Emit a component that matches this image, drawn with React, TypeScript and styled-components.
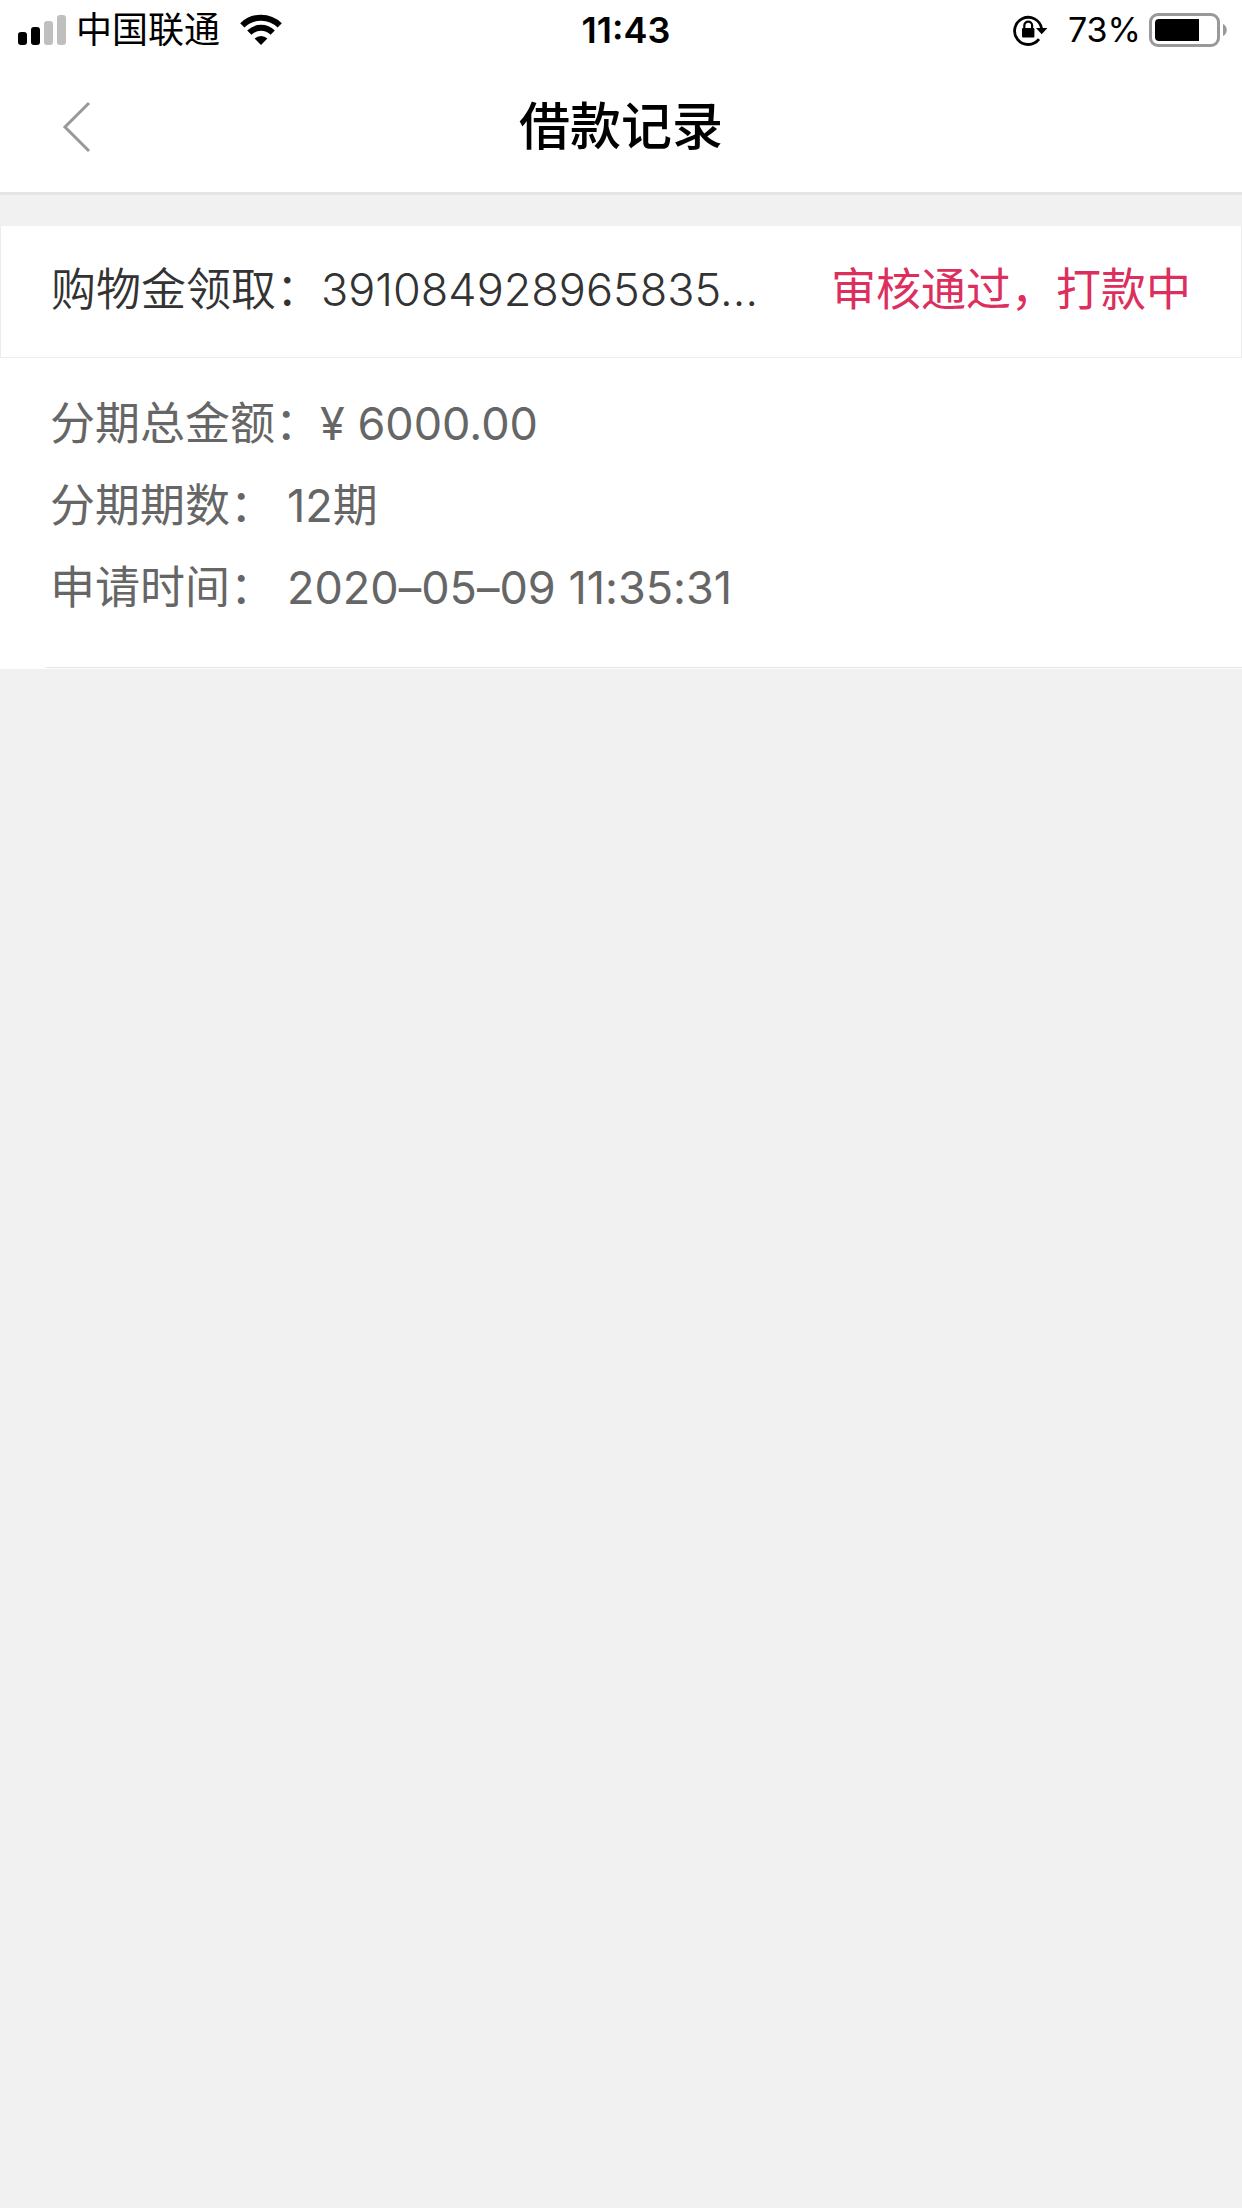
import React from 'react';
import styled, { createGlobalStyle } from 'styled-components';

const GlobalStyle = createGlobalStyle`
  *, *::before, *::after { box-sizing: border-box; }
  html { background: #f1f1f1; }
  body {
    margin: 0;
    font-family: Inter, "Noto Sans CJK SC", sans-serif;
    color: #000;
  }
`;

const Page = styled.div`
  min-height: 100vh;
  background: #f1f1f1;
`;

const StatusBar = styled.div`
  display: grid;
  grid-template-columns: 1fr auto 1fr;
  align-items: center;
  height: 60px;
  padding: 0 8px 0 18px;
  background: #fff;
  font-size: 36px;
  line-height: 60px;
`;

const StatusGroup = styled.div<{ $end?: boolean }>`
  display: flex;
  align-items: center;
  justify-content: ${(p) => (p.$end ? 'flex-end' : 'flex-start')};
`;

const Carrier = styled.span`
  margin: 0 20px 0 9px;
  font-weight: 400;
`;

const Clock = styled.time`
  font-weight: 600;
`;

const Percent = styled.span`
  margin: 0 8px 0 20px;
  font-size: 34px;
`;

const NavBar = styled.header`
  display: grid;
  grid-template-columns: 1fr auto 1fr;
  align-items: center;
  height: 135px;
  padding: 2px 50px 0;
  background: #fff;
  border-bottom: 3px solid #e4e4e4;
`;

const BackButton = styled.button`
  display: flex;
  justify-self: start;
  padding: 12px;
  border: 0;
  background: none;
  cursor: pointer;
`;

const Title = styled.h1`
  margin: 0;
  font-size: 51px;
  font-weight: 500;
  line-height: 72px;
`;

const Record = styled.article`
  margin-top: 31px;
  background: #fff;
  font-size: 45px;
  font-weight: 400;
  font-feature-settings: "calt" 0;
`;

const RecordHead = styled.div`
  display: flex;
  align-items: center;
  justify-content: space-between;
  gap: 40px;
  height: 132px;
  padding: 0 50px 4px;
  border: 1px solid #ececec;
  border-top: 0;
`;

const OrderName = styled.h2`
  margin: 0;
  font-size: 45px;
  font-weight: 350;
  line-height: 66px;
  color: #333;
`;

const State = styled.span`
  flex: none;
  line-height: 66px;
  color: #dc2f5e;
`;

const Details = styled.dl`
  margin: 0;
  padding: 25px 50px 38px;
  color: #666;
`;

const DetailRow = styled.div`
  display: flex;
  line-height: 82px;
`;

const Term = styled.dt<{ $spaced?: boolean }>`
  margin-right: ${(p) => (p.$spaced ? '12px' : '0')};
`;

const Value = styled.dd`
  margin: 0;
`;

const Divider = styled.hr`
  height: 2px;
  margin: 0 0 0 46px;
  border: 0;
  border-top: 1px solid #e4e4e4;
`;

const SignalIcon = () => (
  <svg width="49" height="32" viewBox="0 0 49 32" aria-hidden="true">
    <rect x="0" y="18" width="9" height="13" rx="3" />
    <rect x="13" y="13" width="9" height="18" rx="3" />
    <rect x="26" y="7" width="9" height="24" rx="3" fill="#bfbfbf" />
    <rect x="39" y="1" width="9" height="30" rx="3" fill="#bfbfbf" />
  </svg>
);

const WifiIcon = () => (
  <svg width="42" height="32" viewBox="0 0 42 32" aria-hidden="true">
    <g fill="none" stroke="#000" strokeWidth="6">
      <path d="M2.3 11.4A26.6 26.6 0 0 1 39.7 11.4" />
      <path d="M9.3 18.6A16.6 16.6 0 0 1 32.7 18.6" />
    </g>
    <path d="M21 31L14.6 24.6A9.2 9.2 0 0 1 27.4 24.6Z" />
  </svg>
);

const RotationLockIcon = () => (
  <svg width="35" height="32" viewBox="0 0 35 32" aria-hidden="true">
    <path
      d="M26 25.2A13.6 13.6 0 1 1 28.6 14.5"
      fill="none"
      stroke="#000"
      strokeWidth="2.8"
    />
    <path d="M23 14H34.4L28.7 20.2Z" />
    <rect x="9" y="14" width="12.4" height="9.6" rx="1" />
    <path d="M11.3 14.5V11.6A3.9 3.9 0 0 1 19.1 11.6V14.5" fill="none" stroke="#000" strokeWidth="2.2" />
  </svg>
);

const BatteryIcon = () => (
  <svg width="85" height="34" viewBox="0 0 85 34" aria-hidden="true">
    <rect x="1.5" y="1.5" width="68" height="31" rx="7.5" fill="none" stroke="#999" strokeWidth="3" />
    <path d="M10 6H50V28H10A4 4 0 0 1 6 24V10A4 4 0 0 1 10 6Z" />
    <path d="M74 11C79 13 79 21 74 23Z" fill="#999" />
  </svg>
);

const BackIcon = () => (
  <svg width="30" height="52" viewBox="0 0 30 52" aria-hidden="true">
    <path d="M27 2L3 26L27 50" fill="none" stroke="#999" strokeWidth="3" />
  </svg>
);

const details = [
  { term: '分期总金额：', value: '¥ 6000.00', spaced: false },
  { term: '分期期数：', value: '12期', spaced: true },
  { term: '申请时间：', value: '2020–05–09 11:35:31', spaced: true },
];

export default function App() {
  return (
    <Page>
      <GlobalStyle />
      <StatusBar>
        <StatusGroup>
          <SignalIcon />
          <Carrier>中国联通</Carrier>
          <WifiIcon />
        </StatusGroup>
        <Clock>11:43</Clock>
        <StatusGroup $end>
          <RotationLockIcon />
          <Percent>73%</Percent>
          <BatteryIcon />
        </StatusGroup>
      </StatusBar>
      <NavBar>
        <BackButton type="button" aria-label="返回">
          <BackIcon />
        </BackButton>
        <Title>借款记录</Title>
      </NavBar>
      <main>
        <Record>
          <RecordHead>
            <OrderName>购物金领取：391084928965835…</OrderName>
            <State>审核通过，打款中</State>
          </RecordHead>
          <Details>
            {details.map((d) => (
              <DetailRow key={d.term}>
                <Term $spaced={d.spaced}>{d.term}</Term>
                <Value>{d.value}</Value>
              </DetailRow>
            ))}
          </Details>
          <Divider />
        </Record>
      </main>
    </Page>
  );
}
